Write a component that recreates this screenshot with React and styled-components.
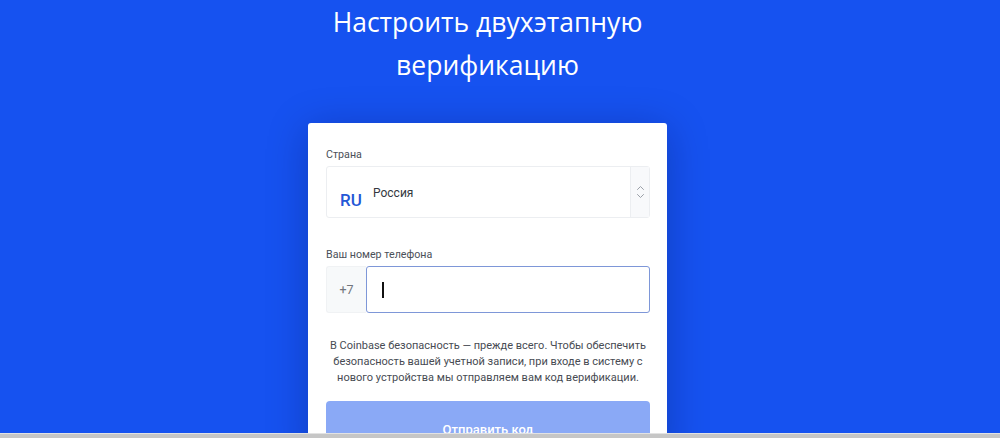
import React from "react";
import styled, { createGlobalStyle } from "styled-components";

const GlobalStyle = createGlobalStyle`
  html, body {
    margin: 0;
    padding: 0;
    height: 100%;
    overflow: hidden;
    background: #1652f0;
  }
  body {
    font-family: Roboto, "Noto Sans", Arial, sans-serif;
  }
`;

const Page = styled.main`
  min-height: 100vh;
  background: #1652f0;
  display: flex;
  flex-direction: column;
  align-items: center;
  padding: 1px 25px 0 0;
  box-sizing: border-box;
`;

const Title = styled.h1`
  margin: 0;
  width: 360px;
  color: #ffffff;
  font-family: "Open Sans", sans-serif;
  font-weight: 400;
  font-size: 26.5px;
  line-height: 43px;
  text-align: center;
`;

const Card = styled.section`
  margin-top: 36px;
  width: 359px;
  box-sizing: border-box;
  background: #ffffff;
  border-radius: 3px;
  padding: 23px 17px 0 18px;
  box-shadow: 0 6px 40px rgba(0, 10, 60, 0.28);
  display: flex;
  flex-direction: column;
`;

const Label = styled.label`
  display: block;
  font-size: 10.7px;
  line-height: 18px;
  color: #4b5059;
  margin-bottom: 2px;
`;

const Select = styled.div`
  height: 52px;
  box-sizing: border-box;
  border: 1px solid #eceef1;
  border-radius: 3px;
  display: flex;
  align-items: stretch;
  margin-bottom: 28px;
`;

const SelectValue = styled.div`
  flex: 1;
  display: flex;
  align-items: flex-start;
  padding-left: 13px;
`;

const CountryCode = styled.span`
  margin-top: 22px;
  font-size: 17px;
  font-weight: 500;
  color: #2457d6;
  line-height: 22px;
  width: 33px;
`;

const CountryName = styled.span`
  margin-top: 17px;
  font-size: 12px;
  line-height: 18px;
  color: #333840;
`;

const Spinner = styled.div`
  width: 18px;
  background: #f8f9fb;
  border-left: 1px solid #eceef1;
  display: flex;
  align-items: center;
  justify-content: center;
`;

const PhoneRow = styled.div`
  height: 47px;
  display: flex;
  margin-bottom: 25px;
`;

const Prefix = styled.div`
  width: 40px;
  background: #f7f9fa;
  border: 1px solid #f0f2f4;
  border-right: none;
  border-radius: 3px 0 0 3px;
  box-sizing: border-box;
  display: flex;
  align-items: center;
  justify-content: center;
  font-size: 12.5px;
  color: #72767d;
`;

const PhoneInput = styled.div`
  flex: 1;
  border: 1px solid #7e97d8;
  border-radius: 3px;
  display: flex;
  align-items: center;
  padding-left: 15px;
`;

const Caret = styled.span`
  width: 1.5px;
  height: 16px;
  background: #111;
  margin-top: 1px;
`;

const Note = styled.p`
  margin: 0 0 15px;
  text-align: center;
  font-size: 11px;
  line-height: 16px;
  color: #474b53;
`;

const SendButton = styled.button`
  height: 58px;
  border: none;
  border-radius: 4px;
  background: #8aa9f6;
  color: #ffffff;
  font-family: Roboto, sans-serif;
  font-size: 13px;
  font-weight: 500;
  padding: 0 0 2px;
`;

const ScrollTrack = styled.div`
  position: fixed;
  left: 0;
  right: 0;
  bottom: 0;
  height: 4px;
  background: #c6c6c6;
  border-top: 1px solid #e2e2e2;
`;

function UpDown() {
  return (
    <svg width="9" height="14" viewBox="0 0 9 14" fill="none" stroke="#9a9fa7" strokeWidth="1" strokeLinecap="round" strokeLinejoin="round">
      <path d="M1.5 4.5 L4.5 1.5 L7.5 4.5" />
      <path d="M1.5 9.5 L4.5 12.5 L7.5 9.5" />
    </svg>
  );
}

export default function App() {
  return (
    <>
      <GlobalStyle />
      <Page>
        <Title>Настроить двухэтапную верификацию</Title>
        <Card>
          <Label>Страна</Label>
          <Select>
            <SelectValue>
              <CountryCode>RU</CountryCode>
              <CountryName>Россия</CountryName>
            </SelectValue>
            <Spinner>
              <UpDown />
            </Spinner>
          </Select>
          <Label>Ваш номер телефона</Label>
          <PhoneRow>
            <Prefix>+7</Prefix>
            <PhoneInput>
              <Caret />
            </PhoneInput>
          </PhoneRow>
          <Note>
            В Coinbase безопасность — прежде всего. Чтобы обеспечить безопасность вашей учетной записи, при входе в систему с нового устройства мы отправляем вам код верификации.
          </Note>
          <SendButton>Отправить код</SendButton>
        </Card>
      </Page>
      <ScrollTrack />
    </>
  );
}
